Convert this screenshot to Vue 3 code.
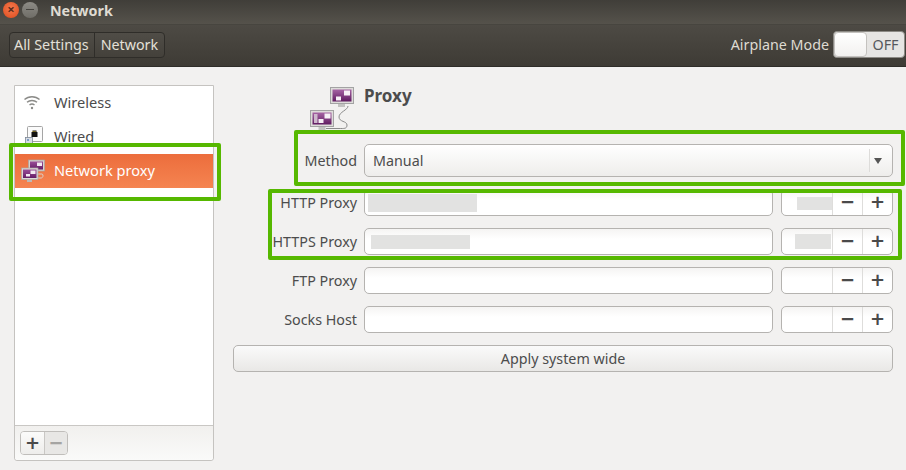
<script setup>
const rows = [
  { label: 'HTTP Proxy', blur: true, blurClass: 'b1', spinClass: 's1' },
  { label: 'HTTPS Proxy', blur: true, blurClass: 'b2', spinClass: 's2' },
  { label: 'FTP Proxy', blur: false },
  { label: 'Socks Host', blur: false }
]
</script>

<template>
  <div class="win">
    <header class="titlebar">
      <span class="close">×</span>
      <span class="mini"></span>
      <span class="wtitle">Network</span>
    </header>
    <div class="toolbar">
      <div class="crumbs"><span class="crumb">All Settings</span><span class="crumb">Network</span></div>
      <div class="air">
        <span>Airplane Mode</span>
        <div class="switch"><span class="knob"></span><span class="off">OFF</span></div>
      </div>
    </div>
    <div class="body">
      <aside class="side">
        <ul class="list">
          <li class="item">
            <svg class="ic ic-wifi" width="18" height="18" viewBox="0 0 18 18" fill="none" stroke="#8b8b88" stroke-width="1.4">
              <path d="M1.5 6.5C5.5 2.8 12.5 2.8 16.5 6.5" />
              <path d="M4 9.3C6.8 6.8 11.2 6.8 14 9.3" />
              <path d="M6.5 12C8 10.8 10 10.8 11.5 12" />
              <circle cx="9" cy="15" r="1.2" fill="#8b8b88" stroke="none" />
            </svg>
            <span class="txt">Wireless</span>
          </li>
          <li class="item">
            <svg class="ic ic-wired" width="20" height="22" viewBox="0 0 20 22">
              <rect x="2.5" y="0.5" width="15" height="15" rx="1" fill="#fbfbfb" stroke="#a5a5a5" />
              <path d="M6.5 6h1V4.5h4V6h1v5h-6z" fill="#111" />
              <path d="M7.5 5.5h1M9.5 5.5h1" stroke="#d9b93a" stroke-width="1" />
              <rect x="0.5" y="11.5" width="7" height="6" fill="#d8dde4" stroke="#7d8897" stroke-width="0.8" />
              <rect x="2" y="13" width="2" height="2" fill="#7f9cc4" />
              <path d="M2 19.5h3" stroke="#b7cbe2" />
            </svg>
            <span class="txt">Wired</span>
          </li>
          <li class="item sel">
            <svg class="ic" width="24" height="24" viewBox="0 0 24 24">
              <defs>
                <linearGradient id="pur" x1="0" y1="0" x2="0" y2="1">
                  <stop offset="0" stop-color="#9a4f98" />
                  <stop offset="1" stop-color="#651c66" />
                </linearGradient>
              </defs>
              <path d="M17 15h4c1.5 0 1.5 4-1 4H15" fill="none" stroke="#d9cfc8" />
              <rect x="7.5" y="1" width="16" height="11" fill="#d6d2ce" stroke="#a9a5a2" stroke-width="0.7" />
              <rect x="9" y="2.5" width="13" height="8" fill="url(#pur)" />
              <rect x="16" y="3.5" width="5" height="3.5" fill="#f3e9f2" />
              <rect x="0.5" y="9" width="16.5" height="11.5" fill="#dcd9d6" stroke="#a9a5a2" stroke-width="0.7" />
              <rect x="2" y="10.5" width="13.5" height="8.5" fill="url(#pur)" />
              <rect x="9.5" y="11.5" width="5" height="3.5" fill="#f3e9f2" />
              <rect x="5" y="15" width="4" height="2.5" fill="#f3e9f2" />
              <rect x="6" y="20.5" width="5" height="2.5" fill="#bdb9b6" />
            </svg>
            <span class="txt">Network proxy</span>
          </li>
        </ul>
        <div class="sidebar-foot">
          <div class="addrem">
            <button class="ar add">+</button>
            <button class="ar rem">−</button>
          </div>
        </div>
      </aside>

      <main class="form">
        <svg class="bigicon" width="45" height="45" viewBox="0 0 45 45" fill="none">
          <defs>
            <linearGradient id="pur2" x1="0" y1="0" x2="0" y2="1">
              <stop offset="0" stop-color="#a765a5" />
              <stop offset="1" stop-color="#5f1a60" />
            </linearGradient>
          </defs>
          <path d="M38 19c0 4-9 6-9 11s8 4 8 8-3 3.500-8 3.500H16" stroke="#8a8a8a" stroke-width="1" />
          <rect x="20.500" y="0.500" width="23" height="16" fill="#dedcda" stroke="#a3a3a3" />
          <rect x="22.500" y="2.500" width="19" height="12" fill="url(#pur2)" />
          <rect x="34" y="3.500" width="6" height="5" fill="#f7f0f6" />
          <rect x="26" y="9.500" width="5" height="4" fill="#f7f0f6" />
          <rect x="28" y="17" width="7" height="3" fill="#c3c3c1" />
          <rect x="0.500" y="23.500" width="23" height="16" fill="#dedcda" stroke="#a3a3a3" />
          <rect x="2.500" y="25.500" width="19" height="12" fill="url(#pur2)" />
          <rect x="4" y="27" width="3.500" height="9" fill="#cdb7cc" />
          <rect x="14.500" y="26.500" width="6" height="5" fill="#f7f0f6" />
          <rect x="8.500" y="32" width="5" height="4" fill="#f7f0f6" />
          <rect x="8.500" y="40" width="7" height="3" fill="#c3c3c1" />
        </svg>
        <h1 class="title">Proxy</h1>

        <label class="lab">Method</label>
        <div class="combo">
          <span class="val">Manual</span>
          <span class="sep"></span>
          <span class="arrow"></span>
        </div>

        <template v-for="r in rows" :key="r.label">
          <label class="lab">{{ r.label }}</label>
          <div class="line">
            <div class="entry"><span v-if="r.blur" class="blur" :class="r.blurClass"></span></div>
            <div class="spin">
              <span class="num"><span v-if="r.blur" class="blur" :class="r.spinClass"></span></span>
              <span class="sb">−</span>
              <span class="sb">+</span>
            </div>
          </div>
        </template>

        <button class="apply">Apply system wide</button>
      </main>
    </div>

    <div class="mark m1"></div>
    <div class="mark m2"></div>
    <div class="mark m3"></div>
  </div>
</template>

<style>
html, body { margin: 0; padding: 0; background: #f2f1f0; }
</style>

<style scoped>
.win {
  position: relative;
  width: 906px;
  height: 470px;
  overflow: hidden;
  background: #f2f1f0;
  font-family: "Noto Sans", "DejaVu Sans", sans-serif;
  font-size: 14.3px;
  color: #4c4c4c;
}
.titlebar {
  height: 25px;
  box-sizing: border-box;
  display: flex;
  align-items: center;
  padding: 0 0 4px 3px;
  background: linear-gradient(#403e39, #55524b);
  border-bottom: 1px solid #47453f;
}
.close {
  width: 16px;
  height: 16px;
  border-radius: 50%;
  background: radial-gradient(circle at 50% 40%, #f47a4e, #dd4a1c);
  color: #5b2b1b;
  font-size: 13px;
  line-height: 15px;
  text-align: center;
  font-weight: 700;
}
.mini {
  width: 16px;
  height: 16px;
  border-radius: 50%;
  margin-left: 3px;
  background: linear-gradient(#8d8b85, #6f6d67);
  position: relative;
}
.mini::after {
  content: "";
  position: absolute;
  left: 4px;
  right: 4px;
  top: 7px;
  height: 1px;
  background: #45433e;
}
.wtitle {
  margin-left: 12px;
  color: #dfdbd2;
  font-weight: 700;
  font-size: 14.3px;
}
.toolbar {
  height: 42px;
  box-sizing: border-box;
  display: flex;
  align-items: center;
  justify-content: space-between;
  padding: 0 1px 0 9px;
  background: linear-gradient(#4d4a44, #3e3b35);
  border-bottom: 1px solid #2f2d29;
}
.crumbs {
  display: flex;
  height: 26px;
  border: 1px solid #2f2d29;
  border-radius: 4px;
  background: linear-gradient(#504d47, #44413b);
  box-sizing: border-box;
  margin-top: -2px;
}
.crumb {
  color: #e4e0d8;
  font-size: 14.3px;
  line-height: 24px;
  padding: 0 5px 0 4px;
}
.crumb + .crumb { border-left: 1px solid #2f2d29; padding: 0 6px; }
.air {
  display: flex;
  align-items: center;
  gap: 4px;
  color: #dfdbd2;
  font-size: 14.3px;
  margin-top: -2px;
}
.switch {
  width: 72px;
  height: 27px;
  box-sizing: border-box;
  border: 1px solid #8c8a85;
  border-radius: 4px;
  background: #e6e5e3;
  display: flex;
  align-items: center;
}
.knob {
  width: 33px;
  height: 25px;
  box-sizing: border-box;
  border: 1px solid #c4c2bf;
  border-radius: 4px;
  background: linear-gradient(#ffffff, #f2f1ef);
}
.off {
  flex: 1;
  text-align: center;
  color: #55585c;
  font-size: 14.3px;
}
.body {
  display: flex;
  padding: 18px 13px 9px 14px;
  height: 403px;
  box-sizing: border-box;
  gap: 19px;
}
.side {
  width: 200px;
  flex: none;
  display: flex;
  flex-direction: column;
  box-sizing: border-box;
  border: 1px solid #c5c3c0;
  border-radius: 0 0 3px 3px;
  background: #fff;
}
.list {
  flex: 1;
  list-style: none;
  margin: 0;
  padding: 0;
}
.item {
  height: 34px;
  display: flex;
  align-items: center;
  padding-left: 39px;
  position: relative;
  font-size: 14.6px;
  color: #4c4c4c;
}
.txt { padding-bottom: 2px; }
.ic {
  position: absolute;
  left: 6px;
  top: 5px;
}
.ic-wifi { left: 8px; top: 7px; }
.ic-wired { left: 10px; top: 6px; }
.sel {
  background: linear-gradient(#ec6d3c, #f58451);
  color: #fff;
}
.sidebar-foot {
  height: 35px;
  box-sizing: border-box;
  border-top: 1px solid #c9c7c4;
  background: linear-gradient(#f1f0ee, #fafaf9);
  padding: 5px 5px 0;
  border-radius: 0 0 3px 3px;
}
.addrem {
  display: flex;
  width: 48px;
  height: 24px;
  box-sizing: border-box;
  border: 1px solid #c0bebb;
  border-radius: 4px;
  overflow: hidden;
}
.ar {
  flex: none;
  width: 23px;
  border: 0;
  padding: 0;
  font: 700 18px/20px "DejaVu Sans", sans-serif;
  color: #4a4a4a;
  background: linear-gradient(#fbfbfa, #eeedeb);
}
.rem {
  flex: 1;
  color: #a5a4a2;
  background: #e8e7e5;
  border-left: 1px solid #c9c7c4;
}
.form {
  flex: 1;
  display: grid;
  grid-template-columns: 124px 1fr;
  column-gap: 7px;
  row-gap: 12px;
  grid-template-rows: 47px 33px 27px 27px 27px 27px 27px;
  align-items: center;
  align-content: start;
}
.bigicon {
  justify-self: end;
  margin-top: 2px;
  margin-right: 2px;
  align-self: start;
}
.title {
  margin: 0;
  font-size: 17px;
  line-height: 22px;
  font-weight: 700;
  color: #4c4c4c;
  align-self: start;
}
.lab {
  text-align: right;
  font-size: 14.3px;
  color: #4c4c4c;
  white-space: nowrap;
  padding-bottom: 1px;
}
.combo {
  height: 33px;
  box-sizing: border-box;
  border: 1px solid #b5b3b0;
  border-radius: 5px;
  background: linear-gradient(#ffffff, #eeedeb);
  display: flex;
  align-items: center;
  padding: 0 8px;
}
.val { flex: 1; font-size: 14.3px; color: #4c4c4c; padding-bottom: 1px; }
.sep {
  width: 1px;
  height: 23px;
  background: #dddcda;
  margin-right: 4px;
}
.arrow {
  width: 0;
  height: 0;
  border-left: 4px solid transparent;
  border-right: 4px solid transparent;
  border-top: 6px solid #555;
  margin-right: 2px;
}
.line {
  display: flex;
  gap: 8px;
  height: 27px;
}
.entry, .spin {
  box-sizing: border-box;
  height: 27px;
  border: 1px solid #b5b3b0;
  border-radius: 5px;
  background: linear-gradient(#f5f4f3, #ffffff 40%);
  position: relative;
}
.entry { width: 409px; flex: none; }
.spin {
  flex: 1;
  display: flex;
  overflow: hidden;
}
.num { flex: 1; position: relative; }
.sb {
  width: 29px;
  flex: none;
  text-align: center;
  border-left: 1px solid #dedddb;
  font: 700 18px/24px "DejaVu Sans", sans-serif;
  color: #4a4a4a;
}
.blur {
  position: absolute;
  background: #e2e2e1;
  filter: blur(0.6px);
}
.b1 { left: 3px; top: 4px; width: 109px; height: 18px; }
.b2 { left: 6px; top: 6px; width: 99px; height: 14px; }
.s1 { left: 15px; top: 7px; width: 35px; height: 13px; }
.s2 { left: 13px; top: 5px; width: 36px; height: 15px; }
.apply {
  grid-column: 1 / 3;
  height: 27px;
  box-sizing: border-box;
  border: 1px solid #b5b3b0;
  border-radius: 5px;
  background: linear-gradient(#fafafa, #e9e8e6);
  font-family: inherit;
  font-size: 14.3px;
  color: #4c4c4c;
  padding: 0 0 1px;
}
.mark {
  position: absolute;
  box-sizing: border-box;
  border: 4px solid #56b800;
  border-radius: 2px;
  pointer-events: none;
}
.m1 { left: 9px; top: 143px; width: 212px; height: 58px; }
.m2 { left: 294px; top: 130px; width: 611px; height: 56px; }
.m3 { left: 268px; top: 189px; width: 634px; height: 71px; }
</style>
